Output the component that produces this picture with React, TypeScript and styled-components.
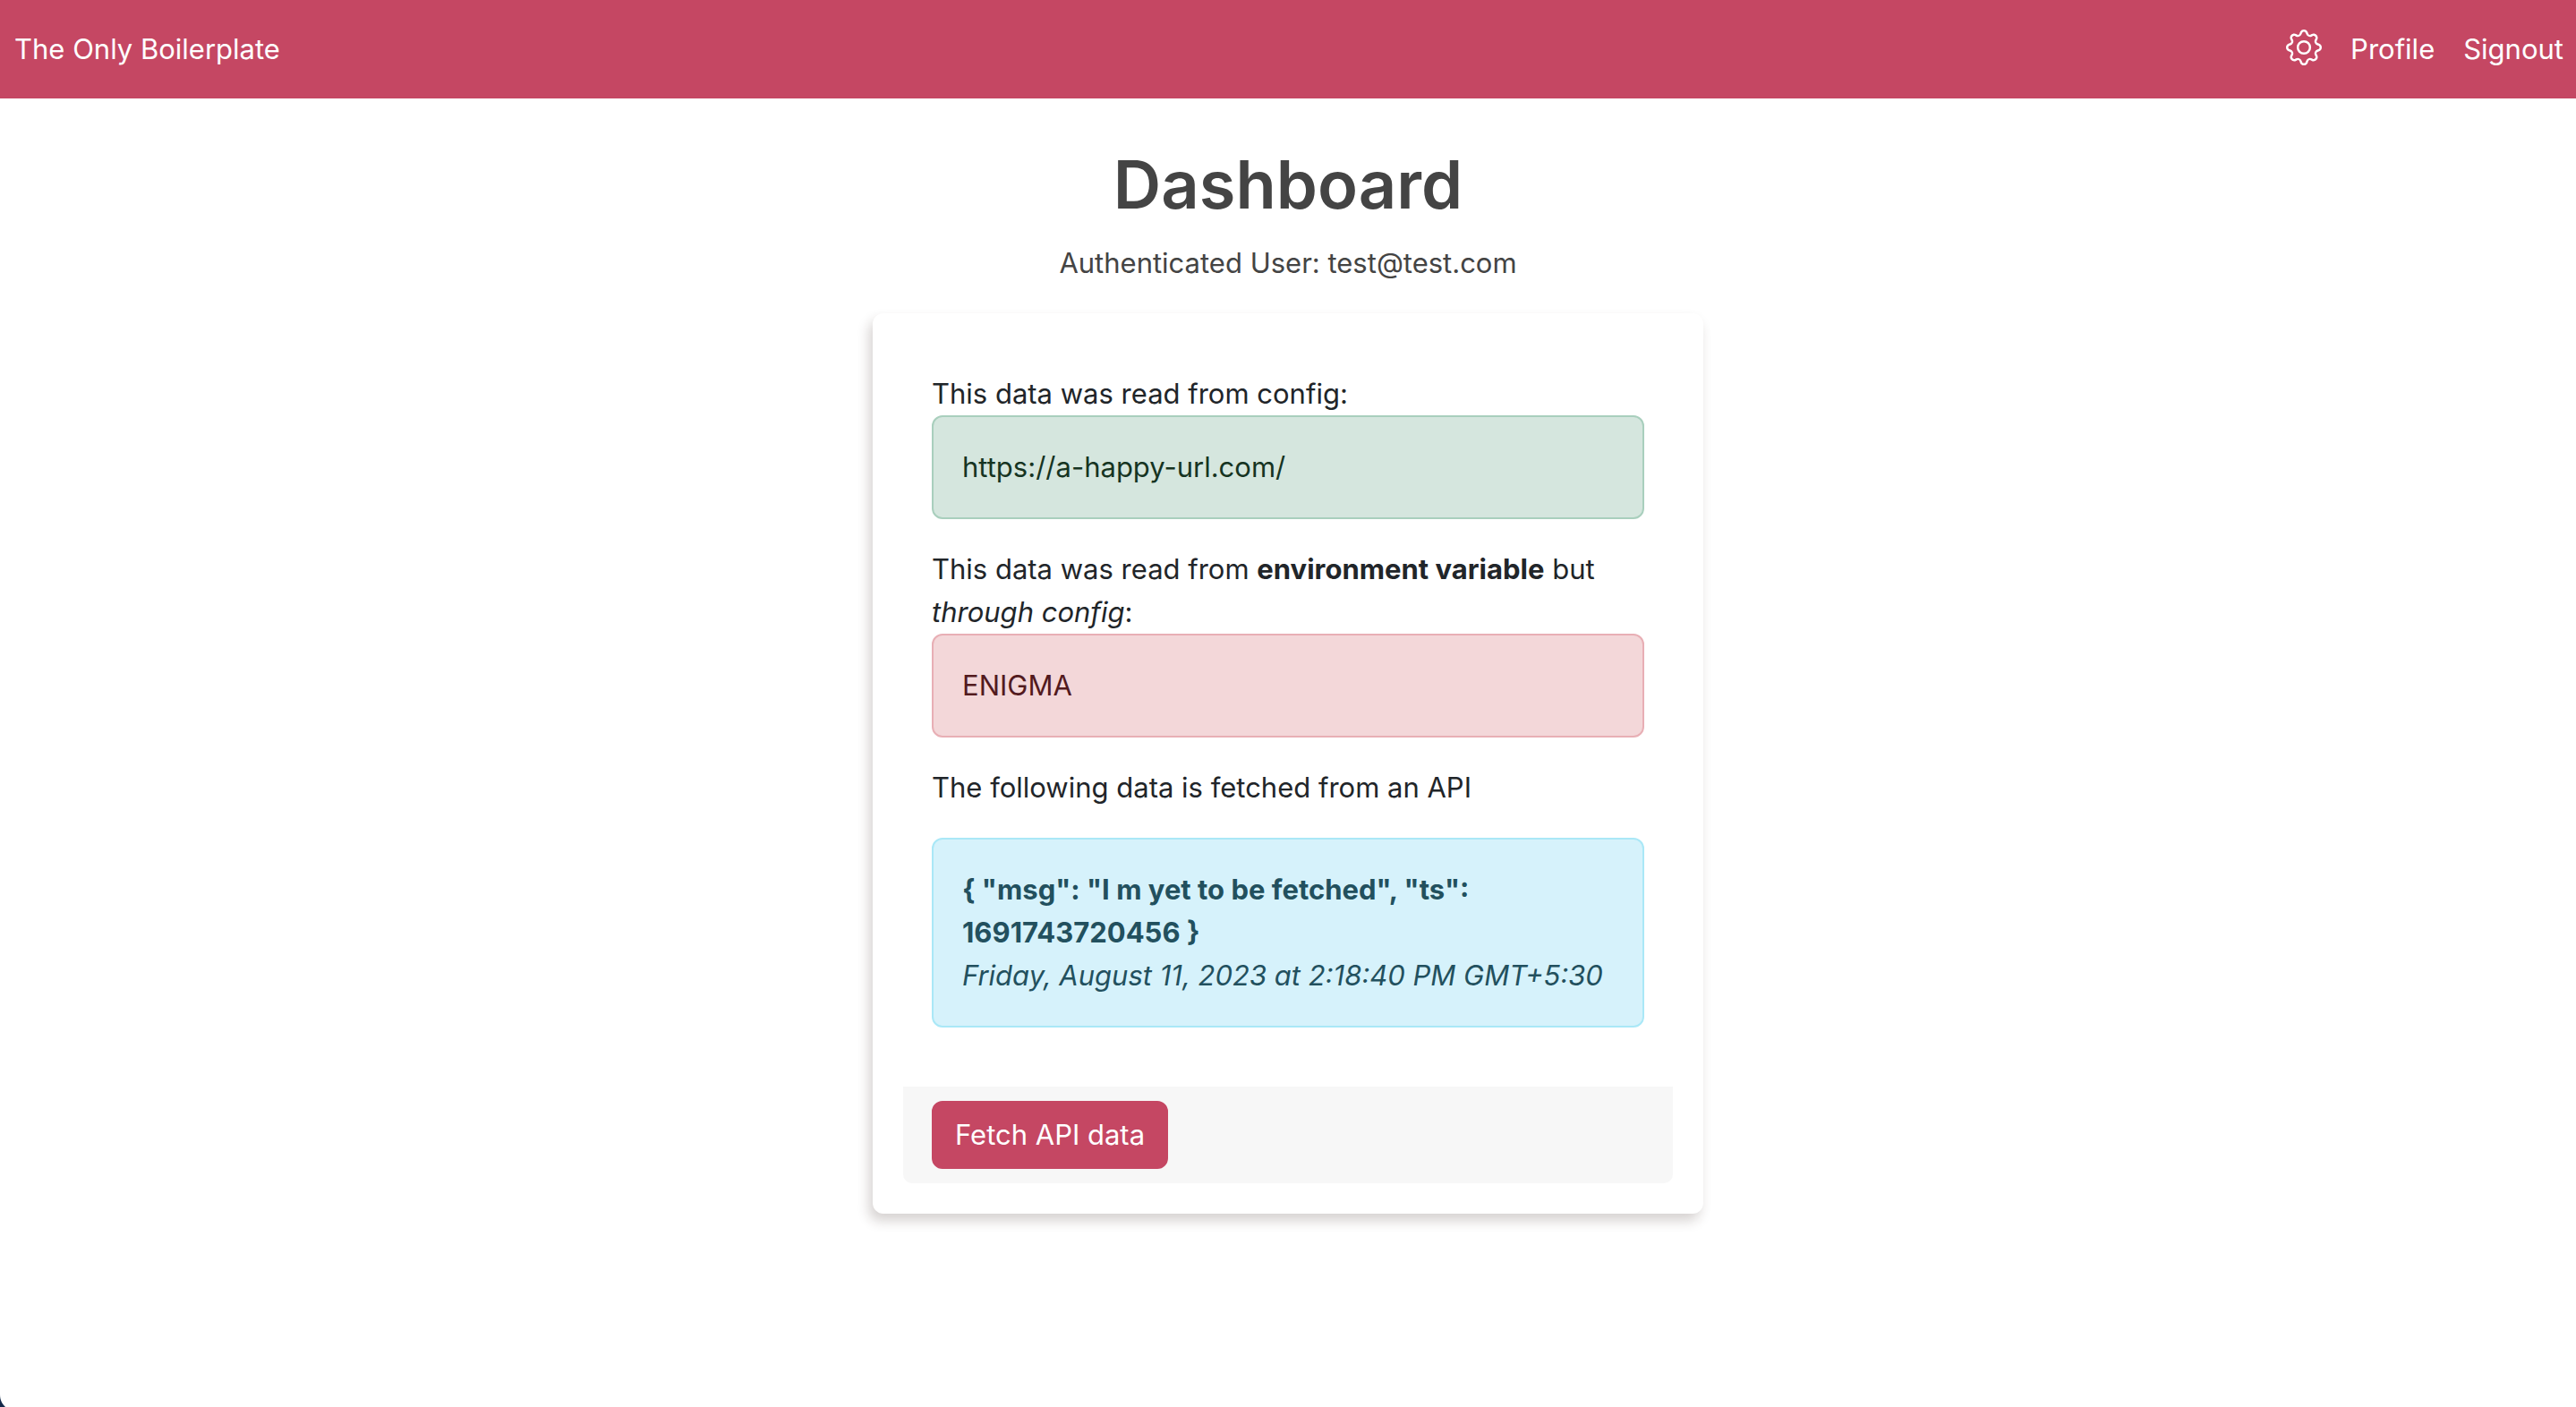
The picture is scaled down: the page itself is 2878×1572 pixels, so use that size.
import React, { useState } from "react";
import styled, { createGlobalStyle } from "styled-components";
import { BsGear } from "react-icons/bs";

const accent = "#c54763";

const GlobalStyle = createGlobalStyle`
  *, *::before, *::after { box-sizing: border-box; }
  body {
    margin: 0;
    background: #fff;
    color: #212529;
    font-family: Inter, "Liberation Sans", sans-serif;
    font-size: 31px;
    line-height: 48px;
  }
`;

const Header = styled.header`
  display: flex;
  align-items: center;
  justify-content: space-between;
  min-height: 110px;
  padding: 0 14px 0 16px;
  background: ${accent};
`;

const HeaderLink = styled.a`
  color: #fff;
  text-decoration: none;
`;

const IconLink = styled(HeaderLink)`
  display: flex;
  height: 44px;
  font-size: 40px;
`;

const Nav = styled.nav`
  display: flex;
  align-items: center;
  gap: 32px;
`;

const Main = styled.main`
  display: flex;
  flex-direction: column;
  align-items: center;
  padding: 48px 32px;
`;

const Title = styled.h1`
  margin: 0 0 16px;
  color: #444;
  font-size: 74px;
  font-weight: 600;
  line-height: 96px;
`;

const Subtitle = styled.p`
  margin: 0 0 32px;
  color: #444;
`;

const Card = styled.section`
  width: 100%;
  max-width: 928px;
  padding: 34px;
  border-radius: 12px;
  background: #fff;
  box-shadow: -4px 8px 14px rgba(50, 30, 25, 0.2);
`;

const CardBody = styled.div`
  padding: 32px 32px 34px;
`;

const Line = styled.p<{ $gap?: number }>`
  margin: 0 0 ${(p) => p.$gap ?? 0}px;
`;

const tones = {
  success: { bg: "#d5e6de", line: "#a9cfbd", text: "#163422" },
  danger: { bg: "#f3d7d9", line: "#e8afb5", text: "#521a1e" },
  info: { bg: "#d6f2fb", line: "#aae8f7", text: "#22505e" },
};

const Alert = styled.div<{ $tone: keyof typeof tones }>`
  margin-bottom: 32px;
  padding: 32px;
  border: 2px solid ${(p) => tones[p.$tone].line};
  border-radius: 12px;
  background: ${(p) => tones[p.$tone].bg};
  color: ${(p) => tones[p.$tone].text};
`;

const CardFooter = styled.footer`
  padding: 16px 32px;
  border-radius: 0 0 10px 10px;
  background: #f7f7f7;
`;

const Button = styled.button`
  padding: 12px 24px;
  border: 2px solid ${accent};
  border-radius: 12px;
  background: ${accent};
  color: #fff;
  font: inherit;
  display: block;
  cursor: pointer;
`;

const Corner = styled.svg`
  position: fixed;
  left: 0;
  bottom: 0;
`;

export default function App() {
  const [data] = useState({
    body: '{ "msg": "I m yet to be fetched", "ts": 1691743720456 }',
    date: "Friday, August 11, 2023 at 2:18:40 PM GMT+5:30",
  });

  return (
    <>
      <GlobalStyle />
      <Header>
        <HeaderLink href="#home">The Only Boilerplate</HeaderLink>
        <Nav>
          <IconLink href="#settings" aria-label="Settings">
            <BsGear />
          </IconLink>
          <HeaderLink href="#profile">Profile</HeaderLink>
          <HeaderLink href="#signout">Signout</HeaderLink>
        </Nav>
      </Header>
      <Main>
        <Title>Dashboard</Title>
        <Subtitle>Authenticated User: test@test.com</Subtitle>
        <Card>
          <CardBody>
            <Line>This data was read from config:</Line>
            <Alert $tone="success">https://a-happy-url.com/</Alert>
            <Line>
              This data was read from <b>environment variable</b> but <i>through config</i>:
            </Line>
            <Alert $tone="danger">ENIGMA</Alert>
            <Line $gap={32}>The following data is fetched from an API</Line>
            <Alert $tone="info">
              <b>{data.body}</b>
              <br />
              <i>{data.date}</i>
            </Alert>
          </CardBody>
          <CardFooter>
            <Button type="button">Fetch API data</Button>
          </CardFooter>
        </Card>
      </Main>
      <Corner width="6" height="14" viewBox="0 0 6 14" aria-hidden="true">
        <path d="M0 0C0 6 2 10 6 14H0Z" fill="#14294a" />
      </Corner>
    </>
  );
}
